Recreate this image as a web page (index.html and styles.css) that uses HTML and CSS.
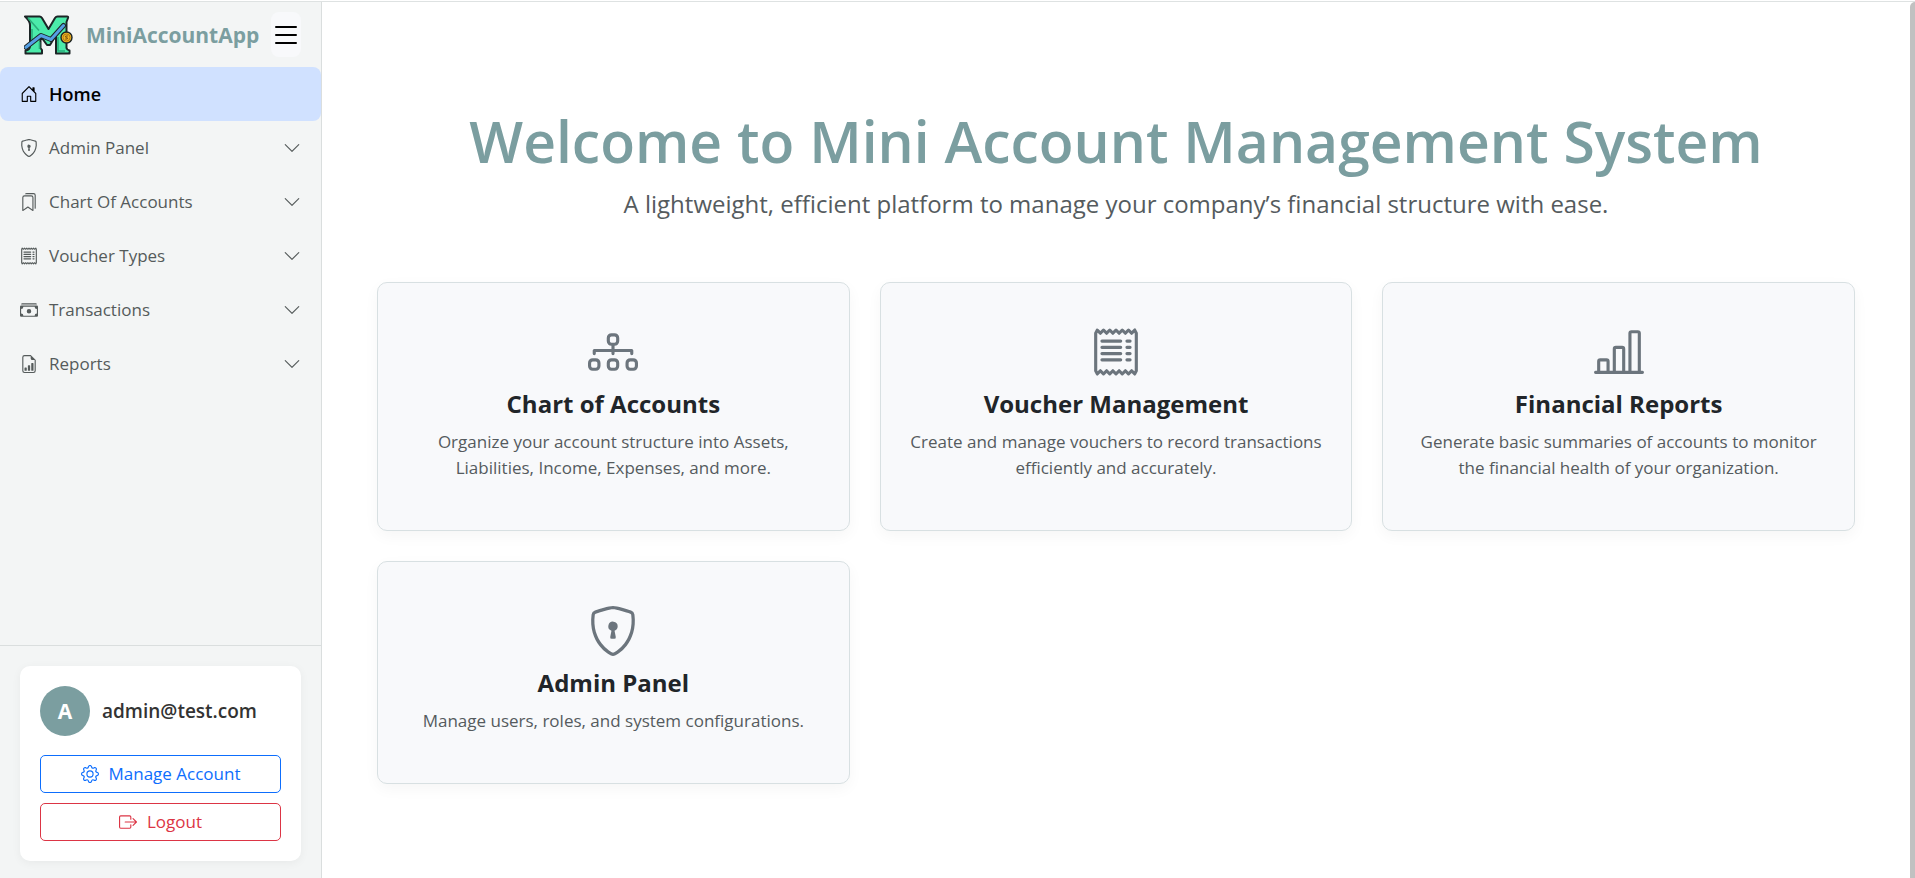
FILE: index.html
```html
<!DOCTYPE html>
<html lang="en">
<head>
<meta charset="utf-8">
<meta name="viewport" content="width=device-width, initial-scale=1">
<title>MiniAccountApp</title>
<link rel="stylesheet" href="styles.css">
</head>
<body>
<svg class="sprite" aria-hidden="true">
  <symbol id="house" viewBox="0 0 16 16"><path d="M8.354 1.146a.5.5 0 0 0-.708 0l-6 6A.5.5 0 0 0 1.5 7.5v7a.5.5 0 0 0 .5.5h4.5a.5.5 0 0 0 .5-.5v-4h2v4a.5.5 0 0 0 .5.5H14a.5.5 0 0 0 .5-.5v-7a.5.5 0 0 0-.146-.354L13 5.793V2.5a.5.5 0 0 0-.5-.5h-1a.5.5 0 0 0-.5.5v1.293zM2.5 14V7.707l5.5-5.5 5.5 5.5V14H10v-4a.5.5 0 0 0-.5-.5h-3a.5.5 0 0 0-.5.5v4z"/></symbol>
  <symbol id="shield" viewBox="0 0 16 16"><path d="M5.338 1.59a61 61 0 0 0-2.837.856.48.48 0 0 0-.328.39c-.554 4.157.726 7.19 2.253 9.188a10.7 10.7 0 0 0 2.287 2.233c.346.244.652.42.893.533q.18.085.293.118a1 1 0 0 0 .101.025 1 1 0 0 0 .1-.025q.114-.034.294-.118c.24-.113.547-.29.893-.533a10.7 10.7 0 0 0 2.287-2.233c1.527-1.997 2.807-5.031 2.253-9.188a.48.48 0 0 0-.328-.39c-.651-.213-1.75-.56-2.837-.855C9.552 1.29 8.531 1.067 8 1.067c-.53 0-1.552.223-2.662.524zM5.072.56C6.157.265 7.31 0 8 0s1.843.265 2.928.56c1.11.3 2.229.655 2.887.87a1.54 1.54 0 0 1 1.044 1.262c.596 4.477-.787 7.795-2.465 9.99a11.8 11.8 0 0 1-2.517 2.453 7 7 0 0 1-1.048.625c-.28.132-.581.24-.829.24s-.548-.108-.829-.24a7 7 0 0 1-1.048-.625 11.8 11.8 0 0 1-2.517-2.453C1.928 10.487.545 7.169 1.141 2.692A1.54 1.54 0 0 1 2.185 1.43 63 63 0 0 1 5.072.56"/><path d="M9.5 6.5a1.5 1.5 0 0 1-1 1.415l.385 1.99a.5.5 0 0 1-.491.595h-.788a.5.5 0 0 1-.49-.595l.384-1.99a1.5 1.5 0 1 1 2-1.415"/></symbol>
  <symbol id="bookmarks" viewBox="0 0 16 16"><path d="M2 4a2 2 0 0 1 2-2h6a2 2 0 0 1 2 2v11.5a.5.5 0 0 1-.777.416L7 13.101l-4.223 2.815A.5.5 0 0 1 2 15.5zm2-1a1 1 0 0 0-1 1v10.566l3.723-2.482a.5.5 0 0 1 .554 0L11 14.566V4a1 1 0 0 0-1-1z"/><path d="M4.268 1H12a1 1 0 0 1 1 1v11.768l.223.148A.5.5 0 0 0 14 13.5V2a2 2 0 0 0-2-2H6a2 2 0 0 0-1.732 1"/></symbol>
  <symbol id="receipt" viewBox="0 0 16 16"><path d="M1.92.506a.5.5 0 0 1 .434.14L3 1.293l.646-.647a.5.5 0 0 1 .708 0L5 1.293l.646-.647a.5.5 0 0 1 .708 0L7 1.293l.646-.647a.5.5 0 0 1 .708 0L9 1.293l.646-.647a.5.5 0 0 1 .708 0l.646.647.646-.647a.5.5 0 0 1 .708 0l.646.647.646-.647a.5.5 0 0 1 .801.13l.5 1A.5.5 0 0 1 15 2v12a.5.5 0 0 1-.053.224l-.5 1a.5.5 0 0 1-.8.13L13 14.707l-.646.647a.5.5 0 0 1-.708 0L11 14.707l-.646.647a.5.5 0 0 1-.708 0L9 14.707l-.646.647a.5.5 0 0 1-.708 0L7 14.707l-.646.647a.5.5 0 0 1-.708 0L5 14.707l-.646.647a.5.5 0 0 1-.708 0L3 14.707l-.646.647a.5.5 0 0 1-.801-.13l-.5-1A.5.5 0 0 1 1 14V2a.5.5 0 0 1 .053-.224l.5-1a.5.5 0 0 1 .367-.27m.217 1.338L2 2.118v11.764l.137.274.51-.51a.5.5 0 0 1 .707 0l.646.647.646-.646a.5.5 0 0 1 .708 0l.646.646.646-.646a.5.5 0 0 1 .708 0l.646.646.646-.646a.5.5 0 0 1 .708 0l.646.646.646-.646a.5.5 0 0 1 .708 0l.646.646.646-.646a.5.5 0 0 1 .708 0l.509.509.137-.274V2.118l-.137-.274-.51.51a.5.5 0 0 1-.707 0L12 1.707l-.646.647a.5.5 0 0 1-.708 0L10 1.707l-.646.647a.5.5 0 0 1-.708 0L8 1.707l-.646.647a.5.5 0 0 1-.708 0L6 1.707l-.646.647a.5.5 0 0 1-.708 0L4 1.707l-.646.647a.5.5 0 0 1-.708 0z"/><path d="M3 4.5a.5.5 0 0 1 .5-.5h6a.5.5 0 1 1 0 1h-6a.5.5 0 0 1-.5-.5m0 2a.5.5 0 0 1 .5-.5h6a.5.5 0 1 1 0 1h-6a.5.5 0 0 1-.5-.5m0 2a.5.5 0 0 1 .5-.5h6a.5.5 0 1 1 0 1h-6a.5.5 0 0 1-.5-.5m0 2a.5.5 0 0 1 .5-.5h6a.5.5 0 0 1 0 1h-6a.5.5 0 0 1-.5-.5m8-6a.5.5 0 0 1 .5-.5h1a.5.5 0 0 1 0 1h-1a.5.5 0 0 1-.5-.5m0 2a.5.5 0 0 1 .5-.5h1a.5.5 0 0 1 0 1h-1a.5.5 0 0 1-.5-.5m0 2a.5.5 0 0 1 .5-.5h1a.5.5 0 0 1 0 1h-1a.5.5 0 0 1-.5-.5m0 2a.5.5 0 0 1 .5-.5h1a.5.5 0 0 1 0 1h-1a.5.5 0 0 1-.5-.5"/></symbol>
  <symbol id="cash" viewBox="0 0 16 16"><path d="M1 3a1 1 0 0 1 1-1h12a1 1 0 0 1 1 1zm7 8a2 2 0 1 0 0-4 2 2 0 0 0 0 4"/><path d="M0 5a1 1 0 0 1 1-1h14a1 1 0 0 1 1 1v8a1 1 0 0 1-1 1H1a1 1 0 0 1-1-1zm3 0a2 2 0 0 1-2 2v4a2 2 0 0 1 2 2h10a2 2 0 0 1 2-2V7a2 2 0 0 1-2-2z"/></symbol>
  <symbol id="file-graph" viewBox="0 0 16 16"><path d="M10 13.5a.5.5 0 0 0 .5.5h1a.5.5 0 0 0 .5-.5v-6a.5.5 0 0 0-.5-.5h-1a.5.5 0 0 0-.5.5zm-2.5.5a.5.5 0 0 1-.5-.5v-4a.5.5 0 0 1 .5-.5h1a.5.5 0 0 1 .5.5v4a.5.5 0 0 1-.5.5zm-3 0a.5.5 0 0 1-.5-.5v-2a.5.5 0 0 1 .5-.5h1a.5.5 0 0 1 .5.5v2a.5.5 0 0 1-.5.5z"/><path d="M14 14V4.5L9.5 0H4a2 2 0 0 0-2 2v12a2 2 0 0 0 2 2h8a2 2 0 0 0 2-2M9.5 3A1.5 1.5 0 0 0 11 4.5h2V14a1 1 0 0 1-1 1H4a1 1 0 0 1-1-1V2a1 1 0 0 1 1-1h5.5z"/></symbol>
  <symbol id="chevron" viewBox="0 0 16 16"><path d="M1.646 4.646a.5.5 0 0 1 .708 0L8 10.293l5.646-5.647a.5.5 0 0 1 .708.708l-6 6a.5.5 0 0 1-.708 0l-6-6a.5.5 0 0 1 0-.708"/></symbol>
  <symbol id="menu" viewBox="0 0 16 16"><path d="M2.5 12a.5.5 0 0 1 .5-.5h10a.5.5 0 0 1 0 1H3a.5.5 0 0 1-.5-.5m0-4a.5.5 0 0 1 .5-.5h10a.5.5 0 0 1 0 1H3a.5.5 0 0 1-.5-.5m0-4a.5.5 0 0 1 .5-.5h10a.5.5 0 0 1 0 1H3a.5.5 0 0 1-.5-.5"/></symbol>
  <symbol id="diagram" viewBox="0 0 16 16"><path d="M6 3.5A1.5 1.5 0 0 1 7.5 2h1A1.5 1.5 0 0 1 10 3.5v1A1.5 1.5 0 0 1 8.5 6v1H14a.5.5 0 0 1 .5.5v1a.5.5 0 0 1-1 0V8h-5v.5a.5.5 0 0 1-1 0V8h-5v.5a.5.5 0 0 1-1 0v-1A.5.5 0 0 1 2 7h5.5V6A1.5 1.5 0 0 1 6 4.5zM8.5 5a.5.5 0 0 0 .5-.5v-1a.5.5 0 0 0-.5-.5h-1a.5.5 0 0 0-.5.5v1a.5.5 0 0 0 .5.5zM0 11.5A1.5 1.5 0 0 1 1.5 10h1A1.5 1.5 0 0 1 4 11.5v1A1.5 1.5 0 0 1 2.5 14h-1A1.5 1.5 0 0 1 0 12.5zm1.5-.5a.5.5 0 0 0-.5.5v1a.5.5 0 0 0 .5.5h1a.5.5 0 0 0 .5-.5v-1a.5.5 0 0 0-.5-.5zm4.5.5A1.5 1.5 0 0 1 7.5 10h1a1.5 1.5 0 0 1 1.5 1.5v1A1.5 1.5 0 0 1 8.5 14h-1A1.5 1.5 0 0 1 6 12.5zm1.5-.5a.5.5 0 0 0-.5.5v1a.5.5 0 0 0 .5.5h1a.5.5 0 0 0 .5-.5v-1a.5.5 0 0 0-.5-.5zm4.5.5a1.5 1.5 0 0 1 1.5-1.5h1a1.5 1.5 0 0 1 1.5 1.5v1a1.5 1.5 0 0 1-1.5 1.5h-1a1.5 1.5 0 0 1-1.5-1.5zm1.5-.5a.5.5 0 0 0-.5.5v1a.5.5 0 0 0 .5.5h1a.5.5 0 0 0 .5-.5v-1a.5.5 0 0 0-.5-.5z"/></symbol>
  <symbol id="bars" viewBox="0 0 16 16"><path d="M11 2a1 1 0 0 1 1-1h2a1 1 0 0 1 1 1v12h.5a.5.5 0 0 1 0 1H.5a.5.5 0 0 1 0-1H1v-3a1 1 0 0 1 1-1h2a1 1 0 0 1 1 1v3h1V7a1 1 0 0 1 1-1h2a1 1 0 0 1 1 1v7h1zm1 12h2V2h-2zm-3 0V7H7v7zm-5 0v-3H2v3z"/></symbol>
  <symbol id="gear" viewBox="0 0 16 16"><path d="M8 4.754a3.246 3.246 0 1 0 0 6.492 3.246 3.246 0 0 0 0-6.492M5.754 8a2.246 2.246 0 1 1 4.492 0 2.246 2.246 0 0 1-4.492 0"/><path d="M9.796 1.343c-.527-1.79-3.065-1.79-3.592 0l-.094.319a.873.873 0 0 1-1.255.52l-.292-.16c-1.64-.892-3.433.902-2.54 2.541l.159.292a.873.873 0 0 1-.52 1.255l-.319.094c-1.79.527-1.79 3.065 0 3.592l.319.094a.873.873 0 0 1 .52 1.255l-.16.292c-.892 1.64.901 3.434 2.541 2.54l.292-.159a.873.873 0 0 1 1.255.52l.094.319c.527 1.79 3.065 1.79 3.592 0l.094-.319a.873.873 0 0 1 1.255-.52l.292.16c1.64.893 3.434-.902 2.54-2.541l-.159-.292a.873.873 0 0 1 .52-1.255l.319-.094c1.79-.527 1.79-3.065 0-3.592l-.319-.094a.873.873 0 0 1-.52-1.255l.16-.292c.893-1.64-.902-3.433-2.541-2.54l-.292.159a.873.873 0 0 1-1.255-.52zm-2.633.283c.246-.835 1.428-.835 1.674 0l.094.319a1.873 1.873 0 0 0 2.693 1.115l.291-.16c.764-.415 1.6.42 1.184 1.185l-.159.292a1.873 1.873 0 0 0 1.116 2.692l.318.094c.835.246.835 1.428 0 1.674l-.319.094a1.873 1.873 0 0 0-1.115 2.693l.16.291c.415.764-.42 1.6-1.185 1.184l-.291-.159a1.873 1.873 0 0 0-2.693 1.116l-.094.318c-.246.835-1.428.835-1.674 0l-.094-.319a1.873 1.873 0 0 0-2.692-1.115l-.292.16c-.764.415-1.6-.42-1.184-1.185l.159-.291A1.873 1.873 0 0 0 1.945 8.93l-.319-.094c-.835-.246-.835-1.428 0-1.674l.319-.094A1.873 1.873 0 0 0 3.06 4.377l-.16-.292c-.415-.764.42-1.6 1.185-1.184l.292.159a1.873 1.873 0 0 0 2.692-1.115z"/></symbol>
  <symbol id="exit" viewBox="0 0 16 16"><path d="M10 12.5a.5.5 0 0 1-.5.5h-8a.5.5 0 0 1-.5-.5v-9a.5.5 0 0 1 .5-.5h8a.5.5 0 0 1 .5.5v2a.5.5 0 0 0 1 0v-2A1.5 1.5 0 0 0 9.5 2h-8A1.5 1.5 0 0 0 0 3.5v9A1.5 1.5 0 0 0 1.5 14h8a1.5 1.5 0 0 0 1.5-1.5v-2a.5.5 0 0 0-1 0z"/><path d="M15.854 8.354a.5.5 0 0 0 0-.708l-3-3a.5.5 0 0 0-.708.708L14.293 7.5H5.5a.5.5 0 0 0 0 1h8.793l-2.147 2.146a.5.5 0 0 0 .708.708z"/></symbol>
</svg>
<div class="app">
  <aside class="sidebar">
    <header class="brand">
      <a class="brand-link" href="#">
        <svg class="logo" viewBox="0 0 50 40" aria-hidden="true">
          <path d="M1 1.500H15.500Q17 1.500 18 3L24.500 14 31 3Q32 1.500 33.500 1.500H43Q44.500 1.500 44 3L42.500 7V33Q43 35 45.500 35.500V38.500H32V20L26 30H23L16.500 21V33L18 35V38.500H1.500V35.500Q6 35 6 31V10Q6 6 1 1.500Z" fill="#4bebaa" stroke="#1c2526" stroke-width="2" stroke-linejoin="round"/>
          <path d="M4 3L15 15.500M8 14V27M34 22V36H41M15.500 27V34" fill="none" stroke="#2aad7b" stroke-width="1.600"/>
          <path d="M2 32.300L17 20.500 27 24.500 39.500 10.500" fill="none" stroke="#1c2526" stroke-width="5" stroke-linecap="round" stroke-linejoin="round"/>
          <path d="M2 32.300L17 20.500 27 24.500 39.500 10.500" fill="none" stroke="#559fe3" stroke-width="3" stroke-linecap="round" stroke-linejoin="round"/>
          <circle cx="42.500" cy="22.500" r="5.500" fill="#f0b323" stroke="#1c2526" stroke-width="1.400"/>
          <circle cx="42.500" cy="22.500" r="3.500" fill="none" stroke="#a36f13" stroke-width=".8"/>
          <path d="M43.800 21H41.800Q41 22.500 42.500 22.500T43.200 24H41.200" fill="none" stroke="#6b460a" stroke-width=".9"/>
        </svg>
        <span>MiniAccountApp</span>
      </a>
      <button class="toggle" type="button" aria-label="Toggle sidebar"><svg class="toggle-icon"><use href="#menu"/></svg></button>
    </header>
    <nav class="nav">
      <a class="nav-item active" href="#"><svg class="icon"><use href="#house"/></svg>Home</a>
      <button class="nav-item" type="button"><svg class="icon"><use href="#shield"/></svg>Admin Panel<svg class="icon caret"><use href="#chevron"/></svg></button>
      <button class="nav-item" type="button"><svg class="icon"><use href="#bookmarks"/></svg>Chart Of Accounts<svg class="icon caret"><use href="#chevron"/></svg></button>
      <button class="nav-item" type="button"><svg class="icon"><use href="#receipt"/></svg>Voucher Types<svg class="icon caret"><use href="#chevron"/></svg></button>
      <button class="nav-item" type="button"><svg class="icon"><use href="#cash"/></svg>Transactions<svg class="icon caret"><use href="#chevron"/></svg></button>
      <button class="nav-item" type="button"><svg class="icon"><use href="#file-graph"/></svg>Reports<svg class="icon caret"><use href="#chevron"/></svg></button>
    </nav>
    <footer class="account">
      <div class="account-card">
        <div class="user"><span class="avatar">A</span><span class="email">admin@test.com</span></div>
        <a class="btn btn-primary" href="#"><svg class="icon"><use href="#gear"/></svg>Manage Account</a>
        <button class="btn btn-danger" type="button"><svg class="icon"><use href="#exit"/></svg>Logout</button>
      </div>
    </footer>
  </aside>
  <main class="content">
    <h1 class="title">Welcome to Mini Account Management System</h1>
    <p class="lead">A lightweight, efficient platform to manage your company’s financial structure with ease.</p>
    <div class="cards">
      <section class="card"><svg class="card-icon"><use href="#diagram"/></svg><h2 class="card-title">Chart of Accounts</h2><p class="card-text">Organize your account structure into Assets, Liabilities, Income, Expenses, and more.</p></section>
      <section class="card"><svg class="card-icon"><use href="#receipt"/></svg><h2 class="card-title">Voucher Management</h2><p class="card-text">Create and manage vouchers to record transactions efficiently and accurately.</p></section>
      <section class="card"><svg class="card-icon"><use href="#bars"/></svg><h2 class="card-title">Financial Reports</h2><p class="card-text">Generate basic summaries of accounts to monitor the financial health of your organization.</p></section>
      <section class="card"><svg class="card-icon"><use href="#shield"/></svg><h2 class="card-title">Admin Panel</h2><p class="card-text">Manage users, roles, and system configurations.</p></section>
    </div>
  </main>
  <div class="scrollbar" aria-hidden="true"></div>
</div>
</body>
</html>
```

FILE: styles.css
```css
* { box-sizing: border-box; }

body {
  margin: 0;
  padding-top: 1px;
  background: #fff;
  color: #212529;
  font-family: "Open Sans", "Noto Sans", sans-serif;
  font-size: 17px;
  line-height: 26px;
}

a { color: inherit; text-decoration: none; }

button { font: inherit; cursor: pointer; }

.sprite { position: absolute; width: 0; height: 0; }

.app {
  display: flex;
  min-height: calc(100vh - 1px);
  border-top: 1px solid #dee2e2;
}

.sidebar {
  display: flex;
  flex: none;
  flex-direction: column;
  width: 322px;
  background: #f3f5f5;
  border-right: 1px solid #dadede;
}

.brand {
  display: flex;
  align-items: center;
  justify-content: space-between;
  padding: 10px 20px;
}

.brand-link {
  display: flex;
  align-items: center;
  gap: 12px;
  padding-left: 4px;
  color: #7b9ea0;
  font-size: 21px;
  font-weight: 700;
}

.logo { width: 50px; height: 40px; }

.toggle {
  display: flex;
  align-items: center;
  justify-content: center;
  width: 30px;
  height: 45px;
  padding: 0;
  background: #f8f9fb;
  border: 0;
  border-radius: 8px;
}

.toggle-icon { flex: none; width: 32px; height: 32px; }

.nav {
  display: flex;
  flex: 1;
  flex-direction: column;
}

.nav-item {
  display: flex;
  align-items: center;
  gap: 11px;
  padding: 14px 20px;
  background: none;
  border: 0;
  border-radius: 8px;
  color: #555b5b;
  text-align: left;
}

.active {
  background: #d0e1ff;
  color: #000;
  font-size: 18px;
  font-weight: 600;
}

.icon { flex: none; width: 18px; height: 18px; fill: currentColor; }

.caret { margin-left: auto; }

.account {
  padding: 20px 20px 17px;
  border-top: 1px solid #dadede;
}

.account-card {
  display: flex;
  flex-direction: column;
  gap: 10px;
  padding: 20px;
  background: #fff;
  border-radius: 10px;
  box-shadow: 0 2px 10px rgba(0, 0, 0, .05);
}

.user {
  display: flex;
  align-items: center;
  gap: 12px;
  margin-bottom: 9px;
  color: #333;
  font-size: 19px;
  font-weight: 600;
}

.avatar {
  display: flex;
  align-items: center;
  justify-content: center;
  width: 50px;
  height: 50px;
  background: #7b9ea0;
  border-radius: 50%;
  color: #fff;
  font-size: 21px;
  font-weight: 700;
}

.btn {
  display: flex;
  align-items: center;
  justify-content: center;
  gap: 10px;
  padding: 5px 10px;
  background: #fff;
  border: 1px solid currentColor;
  border-radius: 5px;
}

.btn-primary { color: #0d6efd; }

.btn-danger { color: #dc3545; }

.content {
  flex: 1;
  min-width: 0;
  padding: 103px 55px 60px;
  text-align: center;
}

.title {
  margin: 0;
  color: #7b9ea0;
  font-size: 57px;
  font-weight: 600;
  line-height: 72px;
}

.lead {
  margin: 8px 0 59px;
  color: #555b5e;
  font-size: 24px;
  line-height: 38px;
}

.cards {
  display: grid;
  grid-template-columns: repeat(3, 1fr);
  gap: 30px;
}

.card {
  padding: 44px 26px 49px;
  background: #f8f9fb;
  border: 1px solid #d8e0e2;
  border-radius: 10px;
  box-shadow: 0 5px 15px rgba(0, 0, 0, .04);
}

.card-icon { display: block; width: 50px; height: 50px; margin: 0 auto 12px; fill: #6c757d; }

.card-title {
  margin: 0 0 10px;
  font-size: 24px;
  font-weight: 700;
  line-height: 30px;
}

.card-text { margin: 0; color: #555b5e; }

.scrollbar {
  flex: none;
  width: 5px;
  background: #c1c1c1;
  border-top-left-radius: 5px;
}
```
